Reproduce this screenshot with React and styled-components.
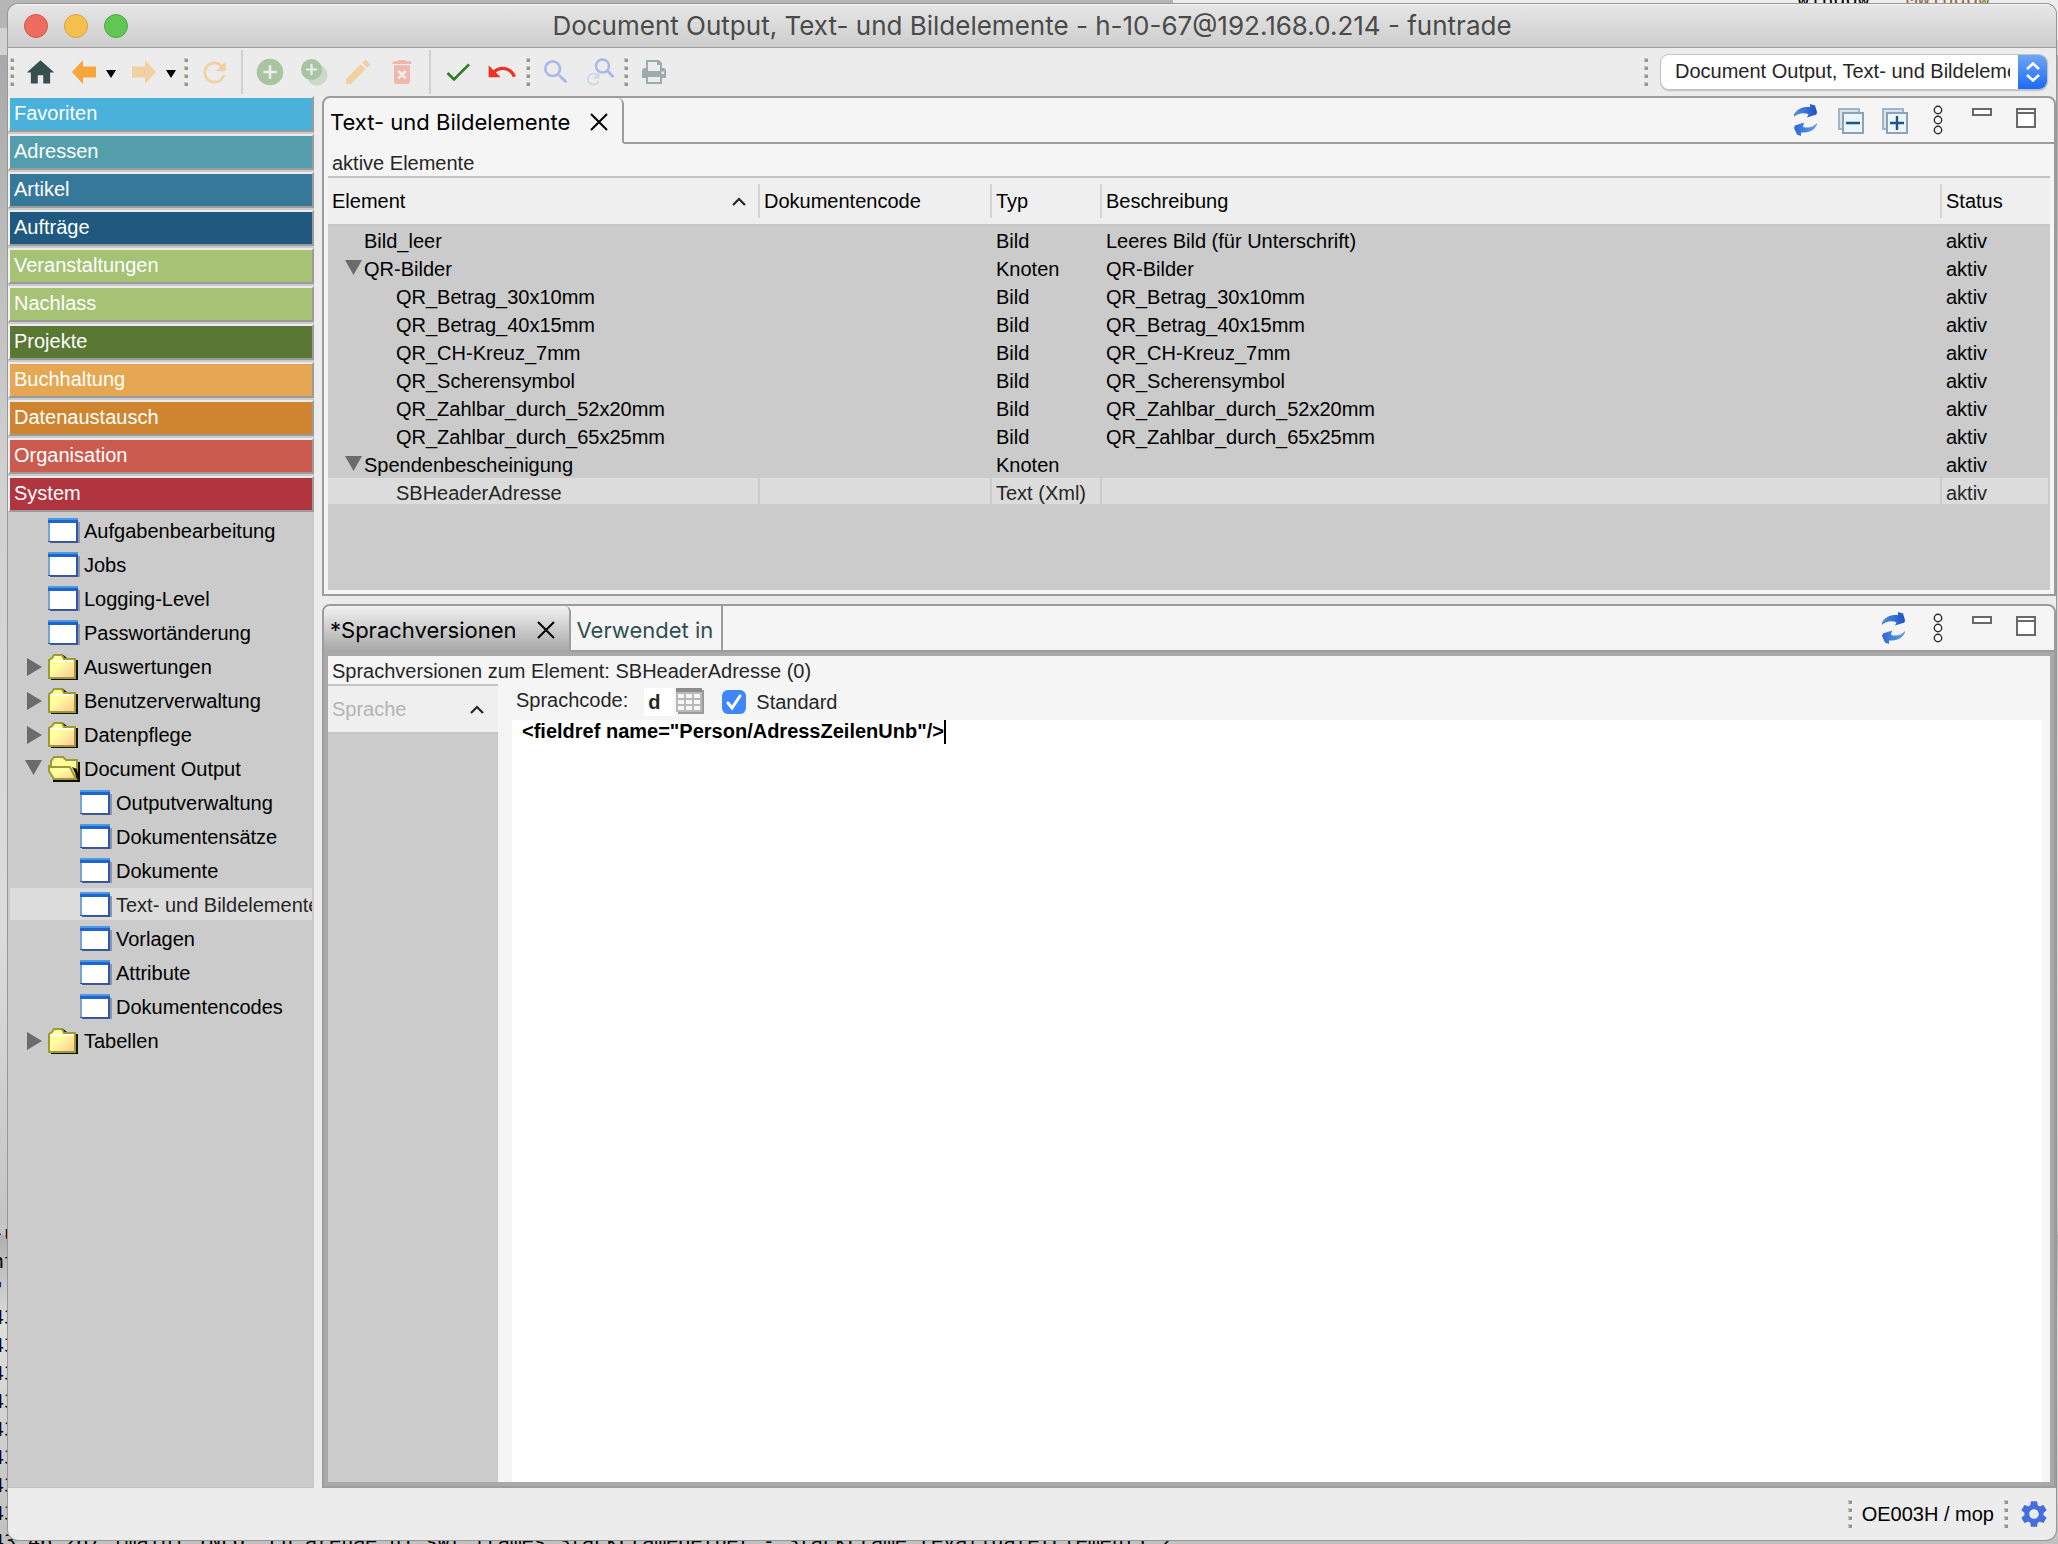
import React, { useState } from "react";

import styled, { createGlobalStyle } from "styled-components";
import {
  MdHome,
  MdRefresh,
  MdAddCircle,
  MdEdit,
  MdDeleteForever,
  MdCheck,
  MdUndo,
  MdSearch,
  MdSettings,
} from "react-icons/md";

const GlobalStyle = createGlobalStyle`
  * {
    box-sizing: border-box;
  }

  body {
    margin: 0;
    font-family: "Liberation Sans", Arial, sans-serif;
    font-size: 20px;
    line-height: 24px;
    color: #000;
  }

  button, input, select, textarea {
    font: inherit;
    color: inherit;
    margin: 0;
    padding: 0;
    border: none;
    background: none;
    outline: none;
  }
`;

// Desktop behind the window

const Desktop = styled.div`
  position: relative;
  height: 100vh;
  padding: 4px 2px 4px 8px;
  overflow: hidden;
  background: linear-gradient(
    #b6b6b6 28px,
    #d2d2d2 28px,
    #d2d2d2 55px,
    #a9a9a9 55px,
    #d0d0d0 30%,
    #dcdcdc 60%,
    #c4c4c4 80%,
    #b0b0b0 80%,
    #dedede 86%,
    #c0c0c0
  );
`;

const EditorStrip = styled.div`
  position: absolute;
  top: 0;
  right: 0;
  width: 43%;
  height: 40px;
  background: #ededed;
`;

const OutlineText = styled.div`
  position: absolute;
  top: -13px;
  right: 68px;
  white-space: pre;
  font-family: "DejaVu Sans Mono", monospace;

  & b {
    font-weight: 400;
    color: #8a7440;
  }
`;

const ConsoleText = styled.pre`
  position: absolute;
  left: -8px;
  bottom: -11px;
  margin: 0;
  font-family: "DejaVu Sans Mono", monospace;
  line-height: 28px;
`;

// Window

const Window = styled.div`
  position: relative;
  height: 100%;
  display: flex;
  flex-direction: column;
  overflow: hidden;
  background: #ececec;
  border-radius: 10px;
  box-shadow: 0 0 0 1px #979797;
`;

const TitleBar = styled.header`
  flex: none;
  height: 44px;
  display: grid;
  grid-template-columns: 1fr auto 1fr;
  align-items: center;
  padding: 0 16px;
  background: linear-gradient(#e6e6e6, #cdcdcd);
  border-top: 1px solid #f4f4f4;
  border-bottom: 1px solid #a0a0a0;
`;

const Title = styled.h1`
  margin: 0;
  font-family: Inter, sans-serif;
  font-size: 26px;
  font-weight: 400;
  line-height: 32px;
  color: #4a4a4a;
`;

const Lights = styled.div`
  display: flex;
  gap: 16px;
`;

const Light = styled.button`
  width: 24px;
  height: 24px;
  border-radius: 50%;
  background: ${(props) => props.$color};
  border: 1px solid ${(props) => props.$edge};
`;

const ToolBar = styled.div`
  flex: none;
  height: 48px;
  display: flex;
  align-items: center;
`;

const ToolButton = styled.button`
  flex: none;
  width: 44px;
  height: 44px;
  display: flex;
  justify-content: center;
  align-items: center;
  color: ${(props) => props.$color};

  & svg {
    display: block;
    overflow: visible;
  }
`;

const DropButton = styled.button`
  width: 10px;
  height: 44px;
  margin-right: 6px;
  display: flex;
  align-items: center;
`;

const GripBox = styled.span`
  flex: none;
  width: 8px;
  margin-right: 2px;
  display: flex;
  justify-content: center;
`;

const Separator = styled.span`
  width: 2px;
  height: 44px;
  margin: 0 5px;
  background: #d0d0d0;
`;

const Fill = styled.div`
  flex: 1;
`;

const SelectBox = styled.div`
  width: 386px;
  height: 34px;
  margin: 0 9px;
  display: flex;
  overflow: hidden;
  background: #fff;
  border-radius: 8px;
  box-shadow: 0 0 0 1px #c4c4c4, 0 1px 1px 1px #bdbdbd;
`;

const Select = styled.select`
  flex: 1;
  min-width: 0;
  appearance: none;
  padding: 0 0 2px 14px;
  margin-right: 8px;
  color: #262626;
`;

const SelectArrow = styled.span`
  width: 29px;
  display: flex;
  justify-content: center;
  align-items: center;
  background: linear-gradient(#6ea6f5, #1b6bf6);
`;

const Content = styled.div`
  flex: 1;
  min-height: 0;
  display: flex;
  gap: 8px;
`;

// Navigation

const SideBar = styled.nav`
  flex: none;
  width: 306px;
  background: #cbcbcb;
  border-bottom: 1px solid #c3c3c3;
`;

const Module = styled.button`
  display: block;
  width: 100%;
  height: 36px;
  margin-bottom: 2px;
  padding: 0 4px 2px;
  text-align: left;
  color: #fff;
  background: ${(props) => props.$color};
  border: 2px solid #9b9b9b;
  border-top-color: #ebebeb;
  border-left-color: #f4f4f4;
`;

const Tree = styled.ul`
  margin: 0;
  padding: 0 2px;
  list-style: none;
`;

const TreeItem = styled.li`
  height: 32px;
  margin-bottom: 2px;
  padding-top: 2px;
  padding-left: ${(props) => (props.$level === 2 ? "46px" : "14px")};
  display: flex;
  overflow: hidden;
  color: ${(props) => (props.$selected ? "#262626" : "#000")};
  background: ${(props) => (props.$selected ? "#dcdcdc" : "transparent")};
`;

const TreeButton = styled.button`
  display: flex;
  align-items: center;
  gap: 4px;
  white-space: nowrap;

  & svg {
    flex: none;
  }
`;

const Twisty = styled.span`
  width: 20px;
  display: flex;
  justify-content: center;
`;

// Panels

const Panels = styled.main`
  flex: 1;
  min-width: 0;
  display: grid;
  grid-template-rows: 500fr 884fr;
  gap: 8px;
`;

const Panel = styled.section`
  min-height: 0;
  display: flex;
  flex-direction: column;
  overflow: hidden;
  background: #f5f5f5;
  border: 2px solid #9c9c9c;
  border-radius: 8px 8px 0 0;
`;

const TabBar = styled.div`
  flex: none;
  height: 46px;
  display: flex;
`;

const Tab = styled.div`
  display: flex;
  align-items: center;
  gap: 20px;
  padding: 3px ${(props) => (props.$active ? "14px" : "8px")} 0 6px;
  font-family: Inter, sans-serif;
  font-size: 22px;
  border-right: 2px solid #9c9c9c;
  border-bottom: 2px solid ${(props) => props.$line || "#9c9c9c"};
  border-top-right-radius: ${(props) => (props.$active ? "6px" : "0")};
  background: ${(props) =>
    props.$shaded ? "linear-gradient(#f2f2f2, #a9a9a9)" : "none"};
  color: ${(props) => (props.$active ? "#000" : "#2f4f4f")};

  & button,
  & svg {
    display: block;
  }
`;

const TabTools = styled.div`
  flex: 1;
  display: flex;
  justify-content: flex-end;
  padding-right: 6px;
  border-bottom: 2px solid #9c9c9c;
`;

const ListCaption = styled.div`
  height: 32px;
  padding: 7px 8px 0 8px;
  color: #262626;
`;

const TableArea = styled.div`
  flex: 1;
  min-height: 0;
  margin: 0 4px 4px;
  overflow: hidden;
  background: #cbcbcb;
  border-top: 2px solid #c4c4c4;
`;

const Table = styled.table`
  width: 100%;
  table-layout: fixed;
  border-collapse: separate;
  border-spacing: 0;
`;

const HeadCell = styled.th`
  width: ${(props) => props.$width || "auto"};
  height: 48px;
  padding: 6px 0;
  text-align: left;
  font-weight: 400;
  background: #efefef;
  border-bottom: 2px solid #c6c6c6;
`;

const HeadLabel = styled.div`
  height: 34px;
  padding: 0 12px 0 4px;
  display: flex;
  justify-content: space-between;
  align-items: center;
  border-right: 2px solid ${(props) => (props.$last ? "transparent" : "#d4d4d4")};
`;

const Row = styled.tr`
  color: ${(props) => (props.$selected ? "#262626" : "#000")};
  background: ${(props) => (props.$selected ? "#dcdcdc" : "transparent")};
`;

const Cell = styled.td`
  height: 28px;
  padding: 4px 4px 0;
  line-height: 22px;
  white-space: nowrap;
  border-right: 2px solid #cbcbcb;
  border-bottom: 2px solid #cbcbcb;
`;

const ElementName = styled.div`
  display: flex;
  align-items: center;
  padding-left: ${(props) => (props.$level === 2 ? "44px" : "12px")};
`;

// Language versions

const VersionBody = styled.div`
  flex: 1;
  min-height: 0;
  display: flex;
  flex-direction: column;
  border: 4px solid #a9a9a9;
`;

const VersionCaption = styled.div`
  flex: none;
  height: 28px;
  padding: 3px 4px 0;
  color: #262626;
`;

const VersionColumns = styled.div`
  flex: 1;
  min-height: 0;
  display: flex;
  gap: 14px;
`;

const LanguageList = styled.div`
  flex: none;
  width: 170px;
  background: #cbcbcb;
  border-top: 2px solid #c4c4c4;
`;

const LanguageHead = styled.div`
  height: 48px;
  padding: 0 14px 0 4px;
  display: flex;
  justify-content: space-between;
  align-items: center;
  color: #b4b4b4;
  background: #efefef;
  border-bottom: 2px solid #c6c6c6;
`;

const EditorPane = styled.div`
  flex: 1;
  min-width: 0;
  margin-right: 8px;
  display: flex;
  flex-direction: column;
`;

const FormRow = styled.div`
  height: 36px;
  padding: 4px 4px 0;
  display: flex;
  align-items: flex-start;
  color: #262626;
`;

const CodeInput = styled.input`
  width: 30px;
  height: 28px;
  margin: 0 2px 0 16px;
  padding-left: 4px;
  font-weight: 700;
  background: #fff;
`;

const IconButton = styled.button`
  width: 28px;
  height: 28px;

  & svg {
    display: block;
  }
`;

const CheckLabel = styled.label`
  height: 28px;
  margin-left: 18px;
  display: flex;
  align-items: center;
  gap: 10px;
`;

const CheckBox = styled.input`
  appearance: none;
  width: 24px;
  height: 24px;
  border-radius: 6px;
  background: #fff;
  box-shadow: inset 0 0 0 1px #b4b4b4;

  &:checked {
    box-shadow: none;
    background: #3f86f7
      url("data:image/svg+xml,%3Csvg xmlns='http://www.w3.org/2000/svg' viewBox='0 0 24 24'%3E%3Cpath d='M6 13l4 5L18 6' fill='none' stroke='white' stroke-width='3' stroke-linecap='round'/%3E%3C/svg%3E");
  }
`;

const EditorArea = styled.label`
  flex: 1;
  display: flex;
  align-items: flex-start;
  padding-left: 10px;
  background: #fff;
`;

const Editor = styled.textarea`
  flex: none;
  field-sizing: content;
  display: block;
  height: 24px;
  line-height: 22px;
  resize: none;
  overflow: hidden;
  white-space: pre;
  font-weight: 700;
`;

const Caret = styled.span`
  width: 2px;
  height: 24px;
  background: #000;
`;

const StatusBar = styled.footer`
  flex: none;
  height: 52px;
  display: flex;
  justify-content: flex-end;
  align-items: center;
`;

const StatusText = styled.span`
  margin: 0 8px 0 6px;
`;

// Icons

const Grip = () => (
  <GripBox>
    <svg width="4" height="28">
      {[0, 8, 16, 24].map((y) => (
        <g key={y}>
          <rect y={y} width="4" height="4" fill="#c9c6bd" />
          <rect x="1" y={y + 1} width="3" height="3" fill="#98958a" />
        </g>
      ))}
    </svg>
  </GripBox>
);

const ArrowIcon = ({ right }) => (
  <svg width="24" height="24" viewBox="0 0 24 24">
    <path
      d="M0 12 11 0V6.500H24V17.500H11V24Z"
      fill="currentColor"
      transform={right ? "rotate(180 12 12)" : undefined}
    />
  </svg>
);

const DropIcon = () => (
  <svg width="10" height="12" viewBox="0 0 10 12">
    <path d="M0 4H10L5 12Z" fill="#000" />
  </svg>
);

const CopyIcon = () => (
  <svg width="27" height="27" viewBox="0 0 27 27">
    <circle cx="16" cy="16" r="10.500" fill="#cbd9c8" />
    <circle cx="10.500" cy="10.500" r="10.500" fill="#a8c4a1" />
    <path d="M10.500 5V16M5 10.500H16" stroke="#ececec" strokeWidth="2.200" />
  </svg>
);

const SearchAgainIcon = () => (
  <svg width="28" height="28" viewBox="0 0 28 28">
    <circle cx="16.500" cy="8" r="6.500" fill="none" stroke="#a9b9e8" strokeWidth="2.400" />
    <path d="M21 12.500 27.500 19" stroke="#a9b9e8" strokeWidth="3" />
    <path d="M11.500 17.500A5.500 5.500 0 1 0 12.500 23" fill="none" stroke="#c3dce8" strokeWidth="1.800" />
    <path d="M13.500 14V20.500H7Z" fill="#c3dce8" />
  </svg>
);

const PrintIcon = () => (
  <svg width="24" height="24" viewBox="0 0 24 24">
    <path
      fillRule="evenodd"
      fill="#9eabab"
      d="M4 0H17L20 3V8H21Q24 8 24 11V18H20V24H4V18H0V11Q0 8 3 8H4ZM6 2V11H18V5H15V2ZM6 17V22H18V17ZM19.500 11.500V14H22V11.500Z"
    />
  </svg>
);

const CloseIcon = () => (
  <svg width="18" height="18" viewBox="0 0 18 18">
    <path d="M1 1 17 17M17 1 1 17" stroke="#000" strokeWidth="2" />
  </svg>
);

const ChevronIcon = () => (
  <svg width="14" height="9" viewBox="0 0 14 9">
    <path d="M1 8 7 2 13 8" fill="none" stroke="#262626" strokeWidth="2.200" />
  </svg>
);

const TriangleIcon = ({ open }) => (
  <svg width="18" height="18" viewBox="0 0 18 18">
    <path d={open ? "M0 0H17L8.500 15Z" : "M2 0 17 9 2 18Z"} fill="#6b6b6b" />
  </svg>
);

const SyncIcon = () => (
  <svg width="44" height="44" viewBox="0 0 44 44">
    <defs>
      <linearGradient id="sync" x1="0" x2="1">
        <stop offset="0" stopColor="#4f8ce0" />
        <stop offset="1" stopColor="#1f52c4" />
      </linearGradient>
      <linearGradient id="syncBack" x1="0" x2="1">
        <stop offset="0" stopColor="#62a2ec" />
        <stop offset="1" stopColor="#2f66d2" />
      </linearGradient>
    </defs>
    <path
      d="M10 19V16.500C13 11 18 8.500 26 9V6L31 7.500 33 14 32.500 16.500 23 19.500 24.500 16C18 14.500 14 15.500 10 19Z"
      fill="url(#sync)"
    />
    <path
      d="M10 19V17.500C13 11 18 9.500 26 9.500V6L30 7.500 33 14 32 16.500 23 19.500 24 15C18 13.500 14 15 10 19Z"
      fill="url(#syncBack)"
      transform="rotate(180 21.500 22)"
    />
  </svg>
);

const StackIcon = ({ plus }) => (
  <svg width="44" height="44" viewBox="0 0 44 44">
    <rect x="11" y="11" width="20" height="20" fill="#d3e6f0" stroke="#a3b4c4" strokeWidth="2" />
    <rect x="15" y="15" width="20" height="20" fill="#eaf6fd" stroke="#8fa1b5" strokeWidth="2" />
    <path
      d={plus ? "M18 25H32M25 18V32" : "M18 25H32"}
      stroke="#1f5483"
      strokeWidth="2.400"
    />
  </svg>
);

const DotsIcon = () => (
  <svg width="44" height="44" viewBox="0 0 44 44">
    {[12, 22, 32].map((y) => (
      <circle key={y} cx="22" cy={y} r="3.700" fill="#fff" stroke="#2a2a2a" strokeWidth="1.400" />
    ))}
  </svg>
);

const MinimizeIcon = () => (
  <svg width="44" height="44" viewBox="0 0 44 44">
    <rect x="13" y="11" width="18" height="6" fill="#fff" stroke="#696969" strokeWidth="2" />
  </svg>
);

const MaximizeIcon = () => (
  <svg width="44" height="44" viewBox="0 0 44 44">
    <rect x="13" y="11" width="18" height="18" fill="#fff" stroke="#696969" strokeWidth="2" />
    <path d="M13 15H31" stroke="#696969" strokeWidth="2" />
  </svg>
);

const FormIcon = () => (
  <svg width="32" height="26" viewBox="0 0 32 26">
    <rect x="3" y="4" width="29" height="21" fill="#8d97a8" />
    <rect x="2" y="23" width="28" height="2" fill="#40588c" />
    <rect width="30" height="24" fill="#6fa6dd" />
    <rect width="30" height="2" fill="#4a9ae6" />
    <rect y="2" width="30" height="3" fill="#1f64cc" />
    <rect x="28" y="3" width="2" height="21" fill="#2f55ae" />
    <rect y="23" width="30" height="1" fill="#2f55ae" />
    <rect x="2" y="5" width="26" height="18" fill="#fff" />
  </svg>
);

const FolderIcon = ({ open }) => (
  <svg width="32" height="26" viewBox="0 0 32 26">
    <defs>
      <linearGradient id="folder" x1="0" y1="0" x2="1" y2="1">
        <stop offset="0.400" stopColor="#ffff9e" />
        <stop offset="1" stopColor="#ffc49a" />
      </linearGradient>
    </defs>
    {open ? (
      <>
        <path d="M5 26H32V6H28V22H5Z" fill="#111108" />
        <path
          d="M3 9V5L6 1H15L18 4H29V14L26 23H6L1 13V10H3Z"
          fill="#fffca0"
          stroke="#9c9a31"
          strokeWidth="2"
        />
        <path d="M1 11H22L28 23H6L1 15Z" fill="url(#folder)" stroke="#9c9a31" strokeWidth="2" />
        <path d="M24 11 29 21V13Z" fill="#111108" />
      </>
    ) : (
      <>
        <path d="M3 26H30V6H27V23H3ZM14 0 19 4H14Z" fill="#111108" />
        <path
          d="M1 6 4 4 6 1H14L16 5H27V24H1Z"
          fill="url(#folder)"
          stroke="#9c9a31"
          strokeWidth="2"
        />
        <path d="M3 7H26" stroke="#fffff0" strokeWidth="2" />
      </>
    )}
  </svg>
);

const GridIcon = () => (
  <svg width="28" height="28" viewBox="0 0 28 28">
    <rect x="2" y="2" width="26" height="24" fill="#9a9a9a" />
    <rect width="26" height="24" fill="#b9b9b9" />
    <rect width="26" height="4" fill="#8c8c8c" />
    {[6, 12, 18].map((y) =>
      [2, 10, 18].map((x) => (
        <rect key={`${x}-${y}`} x={x} y={y} width="6" height="4" fill="#f6f6f6" />
      ))
    )}
  </svg>
);

const modules = [
  { name: "Favoriten", color: "#49b1da" },
  { name: "Adressen", color: "#539eaa" },
  { name: "Artikel", color: "#367899" },
  { name: "Aufträge", color: "#1f5980" },
  { name: "Veranstaltungen", color: "#a6c275" },
  { name: "Nachlass", color: "#a6c275" },
  { name: "Projekte", color: "#5a7733" },
  { name: "Buchhaltung", color: "#e5a751" },
  { name: "Datenaustausch", color: "#cf8530" },
  { name: "Organisation", color: "#cb5b4f" },
  { name: "System", color: "#b0353f" },
];

const tree = [
  { name: "Aufgabenbearbeitung" },
  { name: "Jobs" },
  { name: "Logging-Level" },
  { name: "Passwortänderung" },
  { name: "Auswertungen", folder: true },
  { name: "Benutzerverwaltung", folder: true },
  { name: "Datenpflege", folder: true },
  { name: "Document Output", folder: true, open: true },
  { name: "Outputverwaltung", level: 2 },
  { name: "Dokumentensätze", level: 2 },
  { name: "Dokumente", level: 2 },
  { name: "Text- und Bildelemente", level: 2 },
  { name: "Vorlagen", level: 2 },
  { name: "Attribute", level: 2 },
  { name: "Dokumentencodes", level: 2 },
  { name: "Tabellen", folder: true },
];

const elements = [
  { name: "Bild_leer", type: "Bild", text: "Leeres Bild (für Unterschrift)" },
  { name: "QR-Bilder", type: "Knoten", text: "QR-Bilder", open: true },
  { name: "QR_Betrag_30x10mm", type: "Bild", text: "QR_Betrag_30x10mm", level: 2 },
  { name: "QR_Betrag_40x15mm", type: "Bild", text: "QR_Betrag_40x15mm", level: 2 },
  { name: "QR_CH-Kreuz_7mm", type: "Bild", text: "QR_CH-Kreuz_7mm", level: 2 },
  { name: "QR_Scherensymbol", type: "Bild", text: "QR_Scherensymbol", level: 2 },
  { name: "QR_Zahlbar_durch_52x20mm", type: "Bild", text: "QR_Zahlbar_durch_52x20mm", level: 2 },
  { name: "QR_Zahlbar_durch_65x25mm", type: "Bild", text: "QR_Zahlbar_durch_65x25mm", level: 2 },
  { name: "Spendenbescheinigung", type: "Knoten", text: "", open: true },
  { name: "SBHeaderAdresse", type: "Text (Xml)", text: "", level: 2 },
];

const consoleLines = `-u
nt
" /
43
43
43
43
43
43
43
43
43.46.267 [main] INFO  ch.arenae.h1.swt.frames.StackFrameHelper - StackFrame.revalidate(Element1 2`;

function Navigation() {
  const [selected, setSelected] = useState("Text- und Bildelemente");

  return (
    <SideBar>
      {modules.map((module) => (
        <Module key={module.name} $color={module.color}>
          {module.name}
        </Module>
      ))}
      <Tree>
        {tree.map((item) => (
          <TreeItem
            key={item.name}
            $level={item.level}
            $selected={item.name === selected}
          >
            <TreeButton onClick={() => setSelected(item.name)}>
              <Twisty>
                {item.folder ? <TriangleIcon open={item.open} /> : null}
              </Twisty>
              {item.folder ? <FolderIcon open={item.open} /> : <FormIcon />}
              {item.name}
            </TreeButton>
          </TreeItem>
        ))}
      </Tree>
    </SideBar>
  );
}

function ElementsPanel() {
  const [selected, setSelected] = useState("SBHeaderAdresse");

  return (
    <Panel>
      <TabBar>
        <Tab $active $line="#f5f5f5">
          <button>Text- und Bildelemente</button>
          <button aria-label="Schliessen">
            <CloseIcon />
          </button>
        </Tab>
        <TabTools>
          <ToolButton aria-label="Aktualisieren"><SyncIcon /></ToolButton>
          <ToolButton aria-label="Alle zuklappen"><StackIcon /></ToolButton>
          <ToolButton aria-label="Alle aufklappen"><StackIcon plus /></ToolButton>
          <ToolButton aria-label="Menü"><DotsIcon /></ToolButton>
          <ToolButton aria-label="Minimieren"><MinimizeIcon /></ToolButton>
          <ToolButton aria-label="Maximieren"><MaximizeIcon /></ToolButton>
        </TabTools>
      </TabBar>
      <ListCaption>aktive Elemente</ListCaption>
      <TableArea>
        <Table>
          <thead>
            <tr>
              <HeadCell $width="432px">
                <HeadLabel>
                  Element
                  <ChevronIcon />
                </HeadLabel>
              </HeadCell>
              <HeadCell $width="232px">
                <HeadLabel>Dokumentencode</HeadLabel>
              </HeadCell>
              <HeadCell $width="110px">
                <HeadLabel>Typ</HeadLabel>
              </HeadCell>
              <HeadCell>
                <HeadLabel>Beschreibung</HeadLabel>
              </HeadCell>
              <HeadCell $width="108px">
                <HeadLabel $last>Status</HeadLabel>
              </HeadCell>
            </tr>
          </thead>
          <tbody>
            {elements.map((element) => (
              <Row
                key={element.name}
                $selected={element.name === selected}
                onClick={() => setSelected(element.name)}
              >
                <Cell>
                  <ElementName $level={element.level}>
                    <Twisty>
                      {element.open ? <TriangleIcon open /> : null}
                    </Twisty>
                    {element.name}
                  </ElementName>
                </Cell>
                <Cell />
                <Cell>{element.type}</Cell>
                <Cell>{element.text}</Cell>
                <Cell>aktiv</Cell>
              </Row>
            ))}
          </tbody>
        </Table>
      </TableArea>
    </Panel>
  );
}

function VersionsPanel() {
  const [code, setCode] = useState("d");
  const [standard, setStandard] = useState(true);
  const [text, setText] = useState('<fieldref name="Person/AdressZeilenUnb"/>');

  return (
    <Panel>
      <TabBar>
        <Tab $active $shaded $line="#a9a9a9">
          <button>*Sprachversionen</button>
          <button aria-label="Schliessen">
            <CloseIcon />
          </button>
        </Tab>
        <Tab>
          <button>Verwendet in</button>
        </Tab>
        <TabTools>
          <ToolButton aria-label="Aktualisieren"><SyncIcon /></ToolButton>
          <ToolButton aria-label="Menü"><DotsIcon /></ToolButton>
          <ToolButton aria-label="Minimieren"><MinimizeIcon /></ToolButton>
          <ToolButton aria-label="Maximieren"><MaximizeIcon /></ToolButton>
        </TabTools>
      </TabBar>
      <VersionBody>
        <VersionCaption>
          Sprachversionen zum Element: SBHeaderAdresse (0)
        </VersionCaption>
        <VersionColumns>
          <LanguageList>
            <LanguageHead>
              Sprache
              <ChevronIcon />
            </LanguageHead>
          </LanguageList>
          <EditorPane>
            <FormRow>
              <label htmlFor="code">Sprachcode:</label>
              <CodeInput
                type="text"
                id="code"
                value={code}
                onChange={(e) => setCode(e.target.value)}
              />
              <IconButton aria-label="Sprachcode wählen">
                <GridIcon />
              </IconButton>
              <CheckLabel htmlFor="standard">
                <CheckBox
                  type="checkbox"
                  id="standard"
                  checked={standard}
                  onChange={(e) => setStandard(e.target.checked)}
                />
                Standard
              </CheckLabel>
            </FormRow>
            <EditorArea htmlFor="editor">
              <Editor
                id="editor"
                aria-label="Text"
                rows={1}
                spellCheck={false}
                value={text}
                onChange={(e) => setText(e.target.value)}
              />
              <Caret />
            </EditorArea>
          </EditorPane>
        </VersionColumns>
      </VersionBody>
    </Panel>
  );
}

function App() {
  return (
    <Desktop>
      <GlobalStyle />
      <EditorStrip />
      <OutlineText>
        window : <b>MWindow</b>
      </OutlineText>
      <ConsoleText>{consoleLines}</ConsoleText>

      <Window>
        <TitleBar>
          <Lights>
            <Light aria-label="Schliessen" $color="#ee6b60" $edge="#d9524a" />
            <Light aria-label="Minimieren" $color="#f6c04f" $edge="#dba13c" />
            <Light aria-label="Vollbild" $color="#62c655" $edge="#4dab40" />
          </Lights>
          <Title>
            Document Output, Text- und Bildelemente - h-10-67@192.168.0.214 - funtrade
          </Title>
        </TitleBar>

        <ToolBar>
          <Grip />
          <ToolButton aria-label="Start" $color="#35504f"><MdHome size={33} /></ToolButton>
          <ToolButton aria-label="Zurück" $color="#f7a63a"><ArrowIcon /></ToolButton>
          <DropButton aria-label="Verlauf zurück"><DropIcon /></DropButton>
          <ToolButton aria-label="Vorwärts" $color="#f1d0a2"><ArrowIcon right /></ToolButton>
          <DropButton aria-label="Verlauf vorwärts"><DropIcon /></DropButton>
          <Grip />
          <ToolButton aria-label="Neu laden" $color="#f1d0a2"><MdRefresh size={33} /></ToolButton>
          <Separator />
          <ToolButton aria-label="Neu" $color="#a8c4a1"><MdAddCircle size={32} /></ToolButton>
          <ToolButton aria-label="Kopieren"><CopyIcon /></ToolButton>
          <ToolButton aria-label="Bearbeiten" $color="#f1d0a2"><MdEdit size={32} /></ToolButton>
          <ToolButton aria-label="Löschen" $color="#f0b7ac"><MdDeleteForever size={32} /></ToolButton>
          <Separator />
          <ToolButton aria-label="Speichern" $color="#2f7d22"><MdCheck size={32} /></ToolButton>
          <ToolButton aria-label="Rückgängig" $color="#f03222"><MdUndo size={32} /></ToolButton>
          <Grip />
          <ToolButton aria-label="Suchen" $color="#a9b9e8"><MdSearch size={32} /></ToolButton>
          <ToolButton aria-label="Suche wiederholen"><SearchAgainIcon /></ToolButton>
          <Grip />
          <ToolButton aria-label="Drucken"><PrintIcon /></ToolButton>
          <Fill />
          <Grip />
          <SelectBox>
            <Select aria-label="Maske">
              <option>Document Output, Text- und Bildelemente</option>
            </Select>
            <SelectArrow>
              <svg width="14" height="20" viewBox="0 0 14 20">
                <path
                  d="M1 7 7 1.500 13 7M1 13 7 18.500 13 13"
                  fill="none"
                  stroke="#fff"
                  strokeWidth="2.600"
                />
              </svg>
            </SelectArrow>
          </SelectBox>
        </ToolBar>

        <Content>
          <Navigation />
          <Panels>
            <ElementsPanel />
            <VersionsPanel />
          </Panels>
        </Content>

        <StatusBar>
          <Grip />
          <StatusText>OE003H / mop</StatusText>
          <Grip />
          <ToolButton aria-label="Einstellungen" $color="#456ddc"><MdSettings size={32} /></ToolButton>
        </StatusBar>
      </Window>
    </Desktop>
  );
}

export default App;
